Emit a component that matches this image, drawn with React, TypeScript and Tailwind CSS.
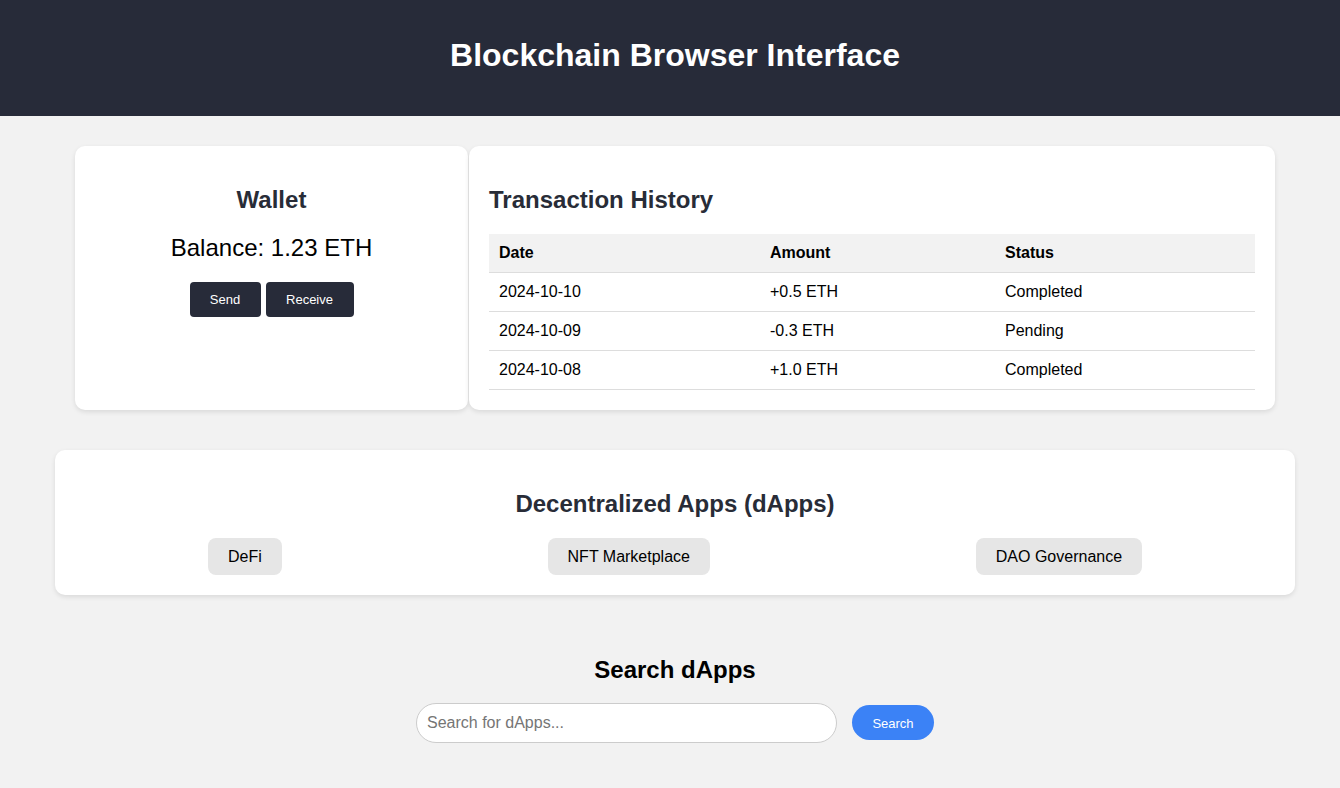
import React, { useState } from 'react';

const transactions = [
    { date: '2024-10-10', amount: '+0.5 ETH', status: 'Completed' },
    { date: '2024-10-09', amount: '-0.3 ETH', status: 'Pending' },
    { date: '2024-10-08', amount: '+1.0 ETH', status: 'Completed' },
];

const dapps = ['DeFi', 'NFT Marketplace', 'DAO Governance'];

export default function App() {
    const [query, setQuery] = useState('');

    return (
        <div className="min-h-[788px] bg-[#f2f2f2] font-['Liberation_Sans',Arial,sans-serif] text-black">
            <header className="h-[116px] bg-[#272b39] pl-[10px] pb-[6px] flex items-center justify-center">
                <h1 className="text-[32px] font-bold text-white leading-[37px]">Blockchain Browser Interface</h1>
            </header>

            <main className="pl-[10px] flex flex-col items-center">
                <div className="mt-[30px] flex w-[1200px] gap-px">
                    <section className="w-[393px] bg-white rounded-[10px] shadow-[0_2px_5px_rgba(0,0,0,0.1)] p-5 flex flex-col items-center">
                        <h2 className="mt-5 text-[24px] font-bold leading-[28px] text-[#282c37]">Wallet</h2>
                        <p className="mt-5 text-[24px] leading-[28px]">Balance: 1.23 ETH</p>
                        <div className="mt-5 flex gap-[5px]">
                            <button className="h-[35px] w-[71px] pt-px rounded-[4px] bg-[#272b39] text-white text-[13px]">Send</button>
                            <button className="h-[35px] w-[88px] pt-px rounded-[4px] bg-[#272b39] text-white text-[13px]">Receive</button>
                        </div>
                    </section>

                    <section className="flex-1 bg-white rounded-[10px] shadow-[0_2px_5px_rgba(0,0,0,0.1)] p-5">
                        <h2 className="mt-5 text-[24px] font-bold leading-[28px] text-[#282c37]">Transaction History</h2>
                        <table className="mt-5 w-full border-collapse text-[16px] text-left">
                            <thead>
                                <tr className="bg-[#f2f2f2] border-b border-[#dddddd]">
                                    <th className="h-[38px] px-[10px] font-bold w-[271px]">Date</th>
                                    <th className="h-[38px] px-[10px] font-bold w-[235px]">Amount</th>
                                    <th className="h-[38px] px-[10px] font-bold">Status</th>
                                </tr>
                            </thead>
                            <tbody>
                                {transactions.map((tx) => (
                                    <tr key={tx.date} className="border-b border-[#dddddd]">
                                        <td className="h-[39px] px-[10px]">{tx.date}</td>
                                        <td className="h-[39px] px-[10px]">{tx.amount}</td>
                                        <td className="h-[39px] px-[10px]">{tx.status}</td>
                                    </tr>
                                ))}
                            </tbody>
                        </table>
                    </section>
                </div>

                <section className="mt-[40px] w-[1240px] bg-white rounded-[10px] shadow-[0_2px_5px_rgba(0,0,0,0.1)] p-5 flex flex-col items-center">
                    <h2 className="mt-5 text-[24px] font-bold leading-[28px] text-[#282c37]">Decentralized Apps (dApps)</h2>
                    <div className="mt-5 w-full flex justify-around">
                        {dapps.map((d) => (
                            <button key={d} className="h-[37px] px-5 pt-[2px] rounded-[8px] bg-[#e6e6e6] text-[16px] text-black">{d}</button>
                        ))}
                    </div>
                </section>

                <section className="mt-[40px] flex flex-col items-center">
                    <h2 className="mt-[21px] text-[24px] font-bold leading-[28px]">Search dApps</h2>
                    <div className="mt-[19px] flex items-center gap-[15px]">
                        <input
                            type="text"
                            value={query}
                            onChange={(e) => setQuery(e.target.value)}
                            placeholder="Search for dApps..."
                            className="w-[421px] h-[40px] px-[10px] rounded-full border border-[#cccccc] bg-white text-[16px] placeholder:text-[#757575] outline-none"
                        />
                        <button className="w-[82px] h-[35px] pt-[2px] rounded-full bg-[#3b82f6] text-white text-[13px]">Search</button>
                    </div>
                </section>
            </main>
        </div>
    );
}
